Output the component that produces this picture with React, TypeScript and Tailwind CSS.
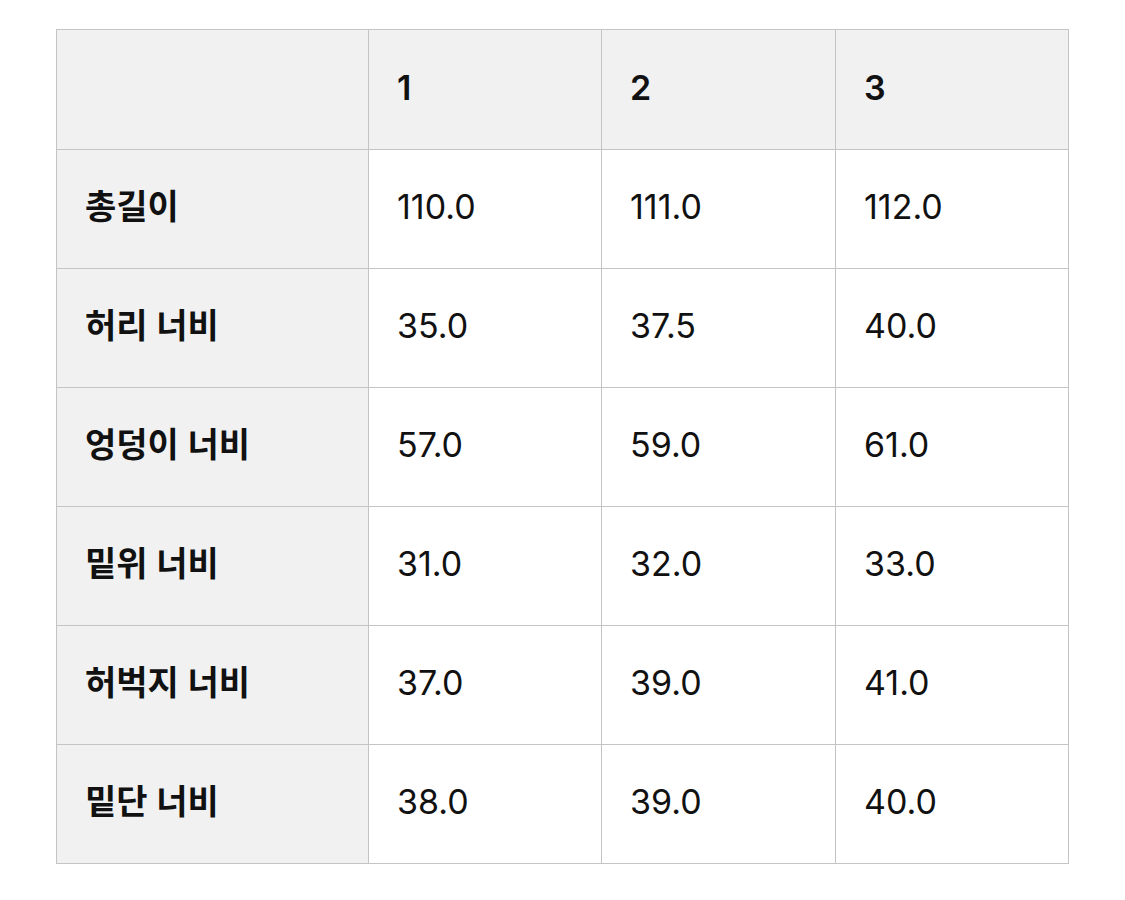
import React from "react";

const header = ["", "1", "2", "3"];
const rows: string[][] = [
  ["총길이", "110.0", "111.0", "112.0"],
  ["허리 너비", "35.0", "37.5", "40.0"],
  ["엉덩이 너비", "57.0", "59.0", "61.0"],
  ["밑위 너비", "31.0", "32.0", "33.0"],
  ["허벅지 너비", "37.0", "39.0", "41.0"],
  ["밑단 너비", "38.0", "39.0", "40.0"],
];

export default function App() {
  return (
    <div
      className="w-[1125px] h-[900px] bg-white pt-[29px] pl-[56px]"
      style={{ fontFamily: 'Inter, "Noto Sans CJK KR", sans-serif' }}
    >
      <table className="border-collapse border border-[#dcdcdc] text-[#111] table-fixed w-[1012px]">
        <colgroup>
          <col className="w-[312px]" />
          <col className="w-[233px]" />
          <col className="w-[234px]" />
          <col className="w-[233px]" />
        </colgroup>
        <thead>
          <tr className="h-[120px] bg-[#f1f1f1]">
            {header.map((h, i) => (
              <th
                key={i}
                className="border border-[#c4c4c4] text-left font-semibold text-[34px] pl-[28px] pb-[5px] align-middle"
              >
                {h}
              </th>
            ))}
          </tr>
        </thead>
        <tbody>
          {rows.map((r, ri) => (
            <tr key={ri} className="h-[119px]">
              {r.map((c, ci) => (
                <td
                  key={ci}
                  className={
                    "border border-[#c4c4c4] text-left text-[34px] pl-[28px] pb-[5px] align-middle " +
                    (ci === 0 ? "bg-[#f1f1f1] font-semibold" : "bg-white font-normal")
                  }
                >
                  {c}
                </td>
              ))}
            </tr>
          ))}
        </tbody>
      </table>
    </div>
  );
}
